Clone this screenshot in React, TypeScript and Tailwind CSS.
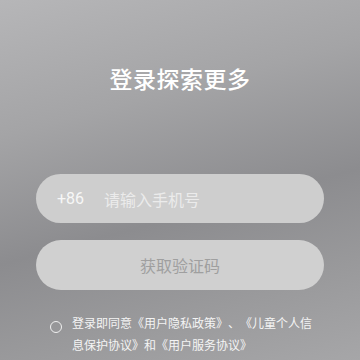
import React from 'react';

export default function App() {
  const [agreed, setAgreed] = React.useState(false);
  const [phone, setPhone] = React.useState('');

  return (
    <div
      className="w-[360px] h-[360px] overflow-hidden flex flex-col items-center bg-[linear-gradient(165deg,#b6b6b8_0%,#a4a4a6_30%,#8c8c8f_58%,#9a9a9c_80%,#a6a6a8_100%)]"
      style={{ fontFamily: '"Noto Sans CJK SC", "Noto Sans", Roboto, sans-serif' }}
    >
      <h1 className="mt-[62px] text-[23px] leading-[32px] font-medium text-white tracking-[0.5px]">登录探索更多</h1>

      {/* phone input */}
      <div className="mt-[80px] w-[288px] h-[49px] rounded-full bg-[#cecece] flex items-center px-[21px]">
        <span className="text-[16px] text-[#f7f7f7] w-[47px]" style={{ fontFamily: 'Roboto, "Noto Sans CJK SC", sans-serif' }}>+86</span>
        <input
          value={phone}
          onChange={e => setPhone(e.target.value)}
          placeholder="请输入手机号"
          className="flex-1 min-w-0 bg-transparent outline-none text-[16px] text-white placeholder:text-[#ebebeb]"
        />
      </div>

      {/* code button */}
      <button className="mt-[17px] w-[288px] h-[50px] rounded-full bg-[#d0d0d0] text-[16px] text-[#9f9f9f]">
        获取验证码
      </button>

      {/* agreement */}
      <div className="mt-[22px] w-[288px] flex items-start pl-[14px]">
        <button
          onClick={() => setAgreed(!agreed)}
          className={`mt-[9px] w-[12px] h-[12px] rounded-full border border-[#f0f0f0] shrink-0 ${agreed ? 'bg-white' : ''}`}
        />
        <p className="ml-[10px] w-[242px] text-[12px] leading-[22px] text-[#f4f4f4] [text-spacing-trim:space-all]">
          登录即同意《用户隐私政策》、《儿童个人信息保护协议》和《用户服务协议》
        </p>
      </div>
    </div>
  );
}
